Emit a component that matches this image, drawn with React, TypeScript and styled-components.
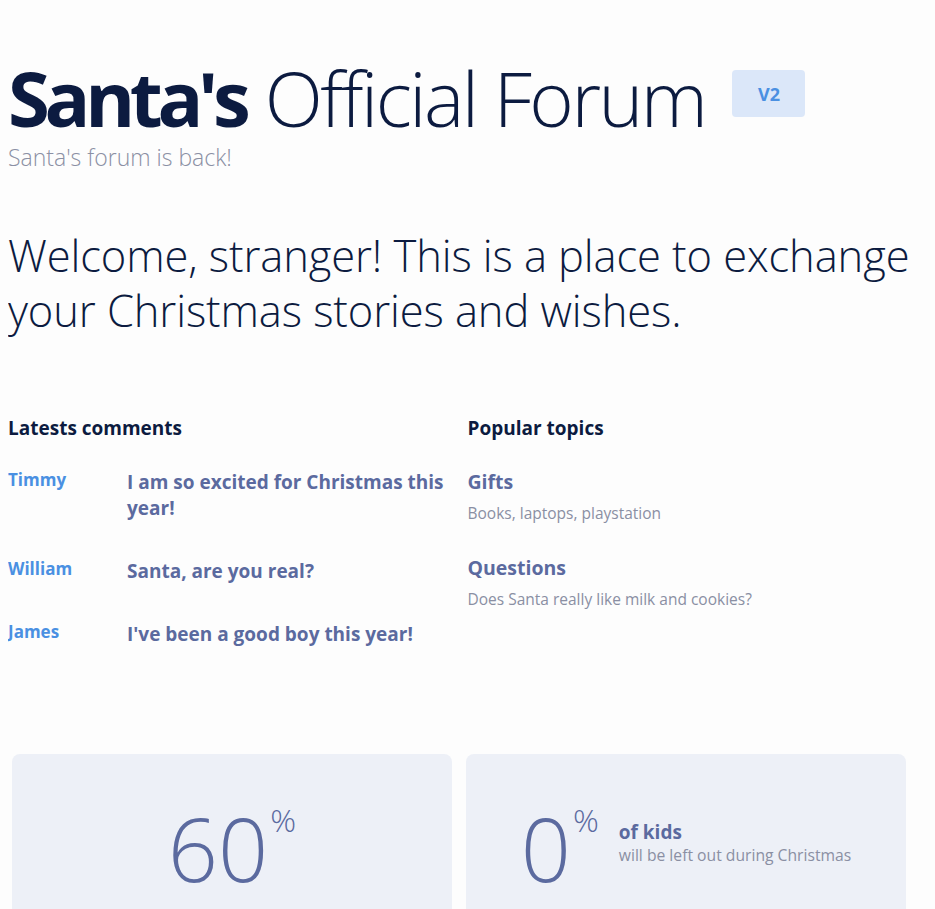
import React from "react";
import styled, { createGlobalStyle } from "styled-components";

const GlobalStyle = createGlobalStyle`
  html, body {
    margin: 0;
    padding: 0;
    background: #fdfdfd;
  }
  body {
    margin: 8px;
    font-family: "Open Sans", "Noto Sans", sans-serif;
    color: #0c1b40;
  }
  * { box-sizing: border-box; }
`;

const Page = styled.main`
  display: flex;
  flex-direction: column;
  padding-top: 45px;
`;

const Header = styled.header`
  display: flex;
  align-items: flex-start;
  gap: 27px;
`;

const Title = styled.h1`
  margin: 0;
  font-size: 76px;
  line-height: 90px;
  font-weight: 300;
  letter-spacing: -2.5px;
  color: #0c1b40;
  white-space: nowrap;
`;

const TitleStrong = styled.strong`
  font-weight: 700;
  letter-spacing: -5.3px;
  margin-right: 2px;
`;

const Badge = styled.span`
  margin-top: 17px;
  display: flex;
  align-items: center;
  justify-content: center;
  width: 73px;
  height: 47px;
  border-radius: 4px;
  background: #dbe7f9;
  color: #4a90e2;
  font-weight: 700;
  font-size: 18px;
`;

const Subtitle = styled.p`
  margin: 0;
  font-size: 23px;
  line-height: 28px;
  font-weight: 300;
  color: #8b90a4;
`;

const Welcome = styled.h2`
  margin: 57px 0 0;
  font-size: 43.5px;
  line-height: 55px;
  font-weight: 300;
  letter-spacing: -0.1px;
  color: #0c1b40;
  max-width: 919px;
`;

const Columns = styled.section`
  margin-top: 77px;
  display: grid;
  grid-template-columns: 1fr 1fr;
`;

const Column = styled.div`
  display: flex;
  flex-direction: column;
`;

const SectionTitle = styled.h3`
  margin: 0 0 28px;
  font-size: 19px;
  line-height: 26px;
  font-weight: 700;
  color: #0c1b40;
`;

const CommentList = styled.ul`
  list-style: none;
  margin: 0;
  padding: 0;
  display: flex;
  flex-direction: column;
  gap: 37px;
`;

const CommentRow = styled.li`
  display: grid;
  grid-template-columns: 119px 330px;
  align-items: start;
`;

const Author = styled.span`
  font-size: 17px;
  line-height: 22px;
  font-weight: 700;
  color: #4a90e2;
`;

const CommentText = styled.span`
  font-size: 19px;
  line-height: 26px;
  font-weight: 700;
  color: #5b6a9f;
`;

const TopicList = styled.ul`
  list-style: none;
  margin: 0;
  padding: 0;
  display: flex;
  flex-direction: column;
  gap: 31px;
`;

const Topic = styled.li`
  display: flex;
  flex-direction: column;
  gap: 7px;
`;

const TopicName = styled.span`
  font-size: 19.5px;
  line-height: 26px;
  font-weight: 700;
  color: #5b6a9f;
`;

const TopicDesc = styled.span`
  font-size: 15.5px;
  line-height: 22px;
  color: #8a8fa3;
`;

const Cards = styled.section`
  margin-top: 107px;
  padding-left: 4px;
  display: flex;
  gap: 14px;
`;

const Card = styled.div`
  width: 440px;
  flex: none;
  background: #edf0f7;
  border-radius: 8px;
  padding: 44px 20px 60px;
  display: flex;
  align-items: center;
  justify-content: center;
  gap: 20px;
`;

const Stat = styled.div`
  display: flex;
  align-items: flex-start;
  color: #5b6a9f;
`;

const StatNumber = styled.span`
  font-size: 88px;
  line-height: 100px;
  font-weight: 300;
`;

const StatUnit = styled.span`
  margin: 6px 0 0 2px;
  font-size: 32px;
  line-height: 32px;
  font-weight: 300;
`;

const StatText = styled.div`
  display: flex;
  flex-direction: column;
  padding-bottom: 10px;
`;

const StatLabel = styled.span`
  font-size: 19px;
  line-height: 24px;
  font-weight: 700;
  color: #5b6a9f;
`;

const StatDesc = styled.span`
  font-size: 15.7px;
  line-height: 22px;
  color: #8a8fa3;
`;

const comments = [
  { author: "Timmy", text: "I am so excited for Christmas this year!" },
  { author: "William", text: "Santa, are you real?" },
  { author: "James", text: "I've been a good boy this year!" },
];

const topics = [
  { name: "Gifts", desc: "Books, laptops, playstation" },
  { name: "Questions", desc: "Does Santa really like milk and cookies?" },
];

export default function App() {
  return (
    <>
      <GlobalStyle />
      <Page>
        <Header>
          <Title>
            <TitleStrong>Santa's</TitleStrong> Official Forum
          </Title>
          <Badge>V2</Badge>
        </Header>
        <Subtitle>Santa's forum is back!</Subtitle>
        <Welcome>
          Welcome, stranger! This is a place to exchange your Christmas stories
          and wishes.
        </Welcome>
        <Columns>
          <Column>
            <SectionTitle>Latests comments</SectionTitle>
            <CommentList>
              {comments.map((c) => (
                <CommentRow key={c.author}>
                  <Author>{c.author}</Author>
                  <CommentText>{c.text}</CommentText>
                </CommentRow>
              ))}
            </CommentList>
          </Column>
          <Column>
            <SectionTitle>Popular topics</SectionTitle>
            <TopicList>
              {topics.map((t) => (
                <Topic key={t.name}>
                  <TopicName>{t.name}</TopicName>
                  <TopicDesc>{t.desc}</TopicDesc>
                </Topic>
              ))}
            </TopicList>
          </Column>
        </Columns>
        <Cards>
          <Card>
            <Stat>
              <StatNumber>60</StatNumber>
              <StatUnit>%</StatUnit>
            </Stat>
          </Card>
          <Card>
            <Stat>
              <StatNumber>0</StatNumber>
              <StatUnit>%</StatUnit>
            </Stat>
            <StatText>
              <StatLabel>of kids</StatLabel>
              <StatDesc>will be left out during Christmas</StatDesc>
            </StatText>
          </Card>
        </Cards>
      </Page>
    </>
  );
}
